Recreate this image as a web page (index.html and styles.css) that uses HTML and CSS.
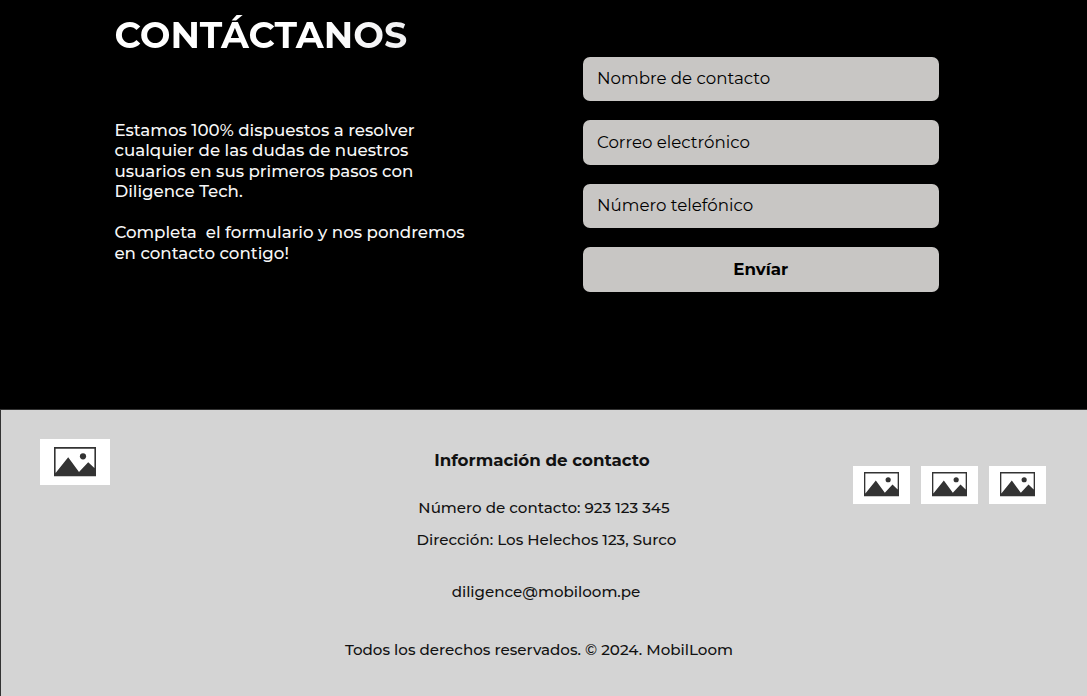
FILE: index.html
```html
<!DOCTYPE html>
<html lang="es">
<head>
<meta charset="utf-8">
<title>Contáctanos</title>
<link rel="stylesheet" href="styles.css">
</head>
<body>
<svg class="defs" aria-hidden="true">
  <symbol id="picture" viewBox="0 0 42 29.5" preserveAspectRatio="none">
    <path fill="#333" fill-rule="evenodd" d="M0 0H42V29.5H0ZM1.6 1.8V26L14.2 10.3L25 25L34.2 15.2L40.4 21V1.8Z"/>
    <circle cx="29" cy="9.3" r="3.1" fill="#333"/>
  </symbol>
</svg>
<main class="contact">
  <section class="intro">
    <h1 class="title">CONTÁCTANOS</h1>
    <p class="text">Estamos 100% dispuestos a resolver<br>cualquier de las dudas de nuestros<br>usuarios en sus primeros pasos con<br>Diligence Tech.</p>
    <p class="text">Completa&nbsp; el formulario y nos pondremos<br>en contacto contigo!</p>
  </section>
  <form class="form">
    <input class="field" type="text" placeholder="Nombre de contacto">
    <input class="field" type="text" placeholder="Correo electrónico">
    <input class="field" type="text" placeholder="Número telefónico">
    <button class="field submit" type="button">Envíar</button>
  </form>
</main>
<footer class="footer">
  <div class="logo"><svg class="logo-icon"><use href="#picture"/></svg></div>
  <div class="info">
    <h2 class="info-title">Información de contacto</h2>
    <p class="phone">Número de contacto: 923 123 345</p>
    <p class="address">Dirección: Los Helechos 123, Surco</p>
    <p class="email">diligence@mobiloom.pe</p>
    <p class="rights">Todos los derechos reservados. © 2024. MobilLoom</p>
  </div>
  <div class="social">
    <div class="tile"><svg class="tile-icon"><use href="#picture"/></svg></div>
    <div class="tile"><svg class="tile-icon"><use href="#picture"/></svg></div>
    <div class="tile"><svg class="tile-icon"><use href="#picture"/></svg></div>
  </div>
</footer>
</body>
</html>
```

FILE: styles.css
```css
* { box-sizing: border-box; margin: 0; }
body {
  height: 696px;
  overflow: hidden;
  background: #000;
  font-family: Montserrat, "Noto Sans", sans-serif;
  font-weight: 500;
}
.defs { display: none; }
.contact {
  display: grid;
  grid-template-columns: 468.6px 356px;
  height: 409px;
  padding-left: 114.4px;
  color: #f7f7f7;
}
.intro { padding-top: 13px; }
.title {
  margin-bottom: 62px;
  font-size: 36.45px;
  line-height: 45px;
  font-weight: 700;
  background: linear-gradient(90deg, #fff 65%, #f0f0f2 95%);
  background-clip: text;
  -webkit-background-clip: text;
  color: transparent;
  width: 310px;
}
.text {
  font-size: 16.66px;
  line-height: 20.45px;
  margin-bottom: 20.45px;
  white-space: nowrap;
}
.form {
  display: flex;
  flex-direction: column;
  gap: 19px;
  padding-top: 56.5px;
}
.field {
  width: 355.6px;
  height: 44.6px;
  flex: none;
  padding: 0 14px 1.4px;
  border: 0;
  border-radius: 7px;
  background: #c8c6c4;
  color: #000;
  font: 400 16.66px/20px Montserrat, "Noto Sans", sans-serif;
}
.field::placeholder { color: #000; opacity: 1; }
.submit { font-weight: 700; text-align: center; }
.footer {
  display: grid;
  grid-template-columns: 228px 1fr 234px;
  align-items: start;
  height: 287px;
  border-top: 1px solid #333;
  border-left: 1px solid #333;
  background: #d4d4d4;
  color: #111;
}
.logo {
  display: flex;
  width: 70px;
  height: 46px;
  margin: 29.4px 0 0 39px;
  padding: 8px 14px;
  background: #fff;
}
.logo-icon { width: 42px; height: 29.5px; }
.info { text-align: center; font-size: 15.12px; line-height: 20px; white-space: nowrap; }
.info-title { font-size: 16.7px; line-height: 20px; font-weight: 700; padding: 40px 0 0 2px; }
.phone { padding: 28px 0 0 6px; }
.address { padding: 12px 0 0 11px; }
.email { padding: 32px 0 0 10px; }
.rights { padding: 38px 4px 0 0; }
.social { display: flex; gap: 11px; padding: 55.6px 0 0 0; }
.tile {
  display: flex;
  width: 57px;
  height: 38px;
  padding: 6.5px 11px;
  background: #fff;
}
.tile-icon { width: 35px; height: 24.5px; }
```
